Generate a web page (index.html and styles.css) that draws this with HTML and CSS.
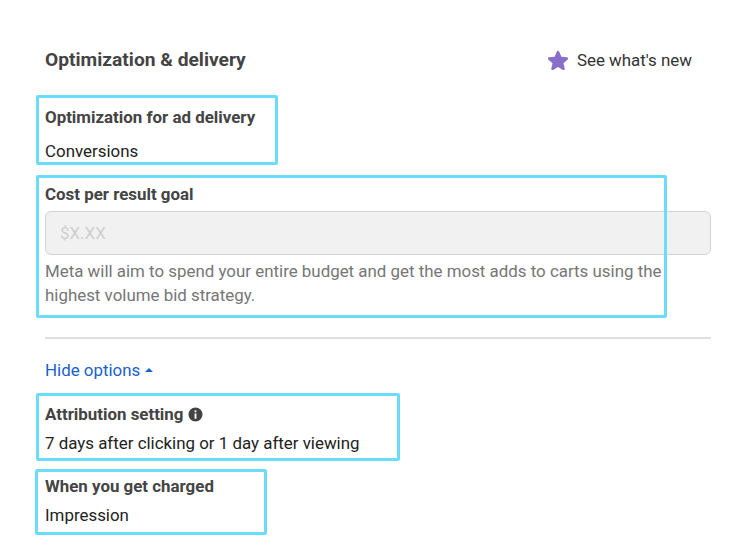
FILE: index.html
```html
<!DOCTYPE html>
<html lang="en">
<head>
<meta charset="utf-8">
<title>Optimization &amp; delivery</title>
<link rel="stylesheet" href="styles.css">
</head>
<body>
<main class="panel">
  <header class="head">
    <h2 class="title">Optimization &amp; delivery</h2>
    <div class="new">
      <svg class="star" viewBox="0 0 20 20" width="20" height="20" aria-hidden="true"><path d="M10 .8c.5 0 .9.3 1.100.7l2.300 5.200 5.600.6c1.100.1 1.500 1.400.7 2.100l-4.200 3.800 1.200 5.500c.2 1-.9 1.800-1.800 1.300L10 17.100l-4.900 2.900c-.9.5-2-.3-1.800-1.300l1.200-5.500L.3 9.400c-.8-.7-.4-2 .7-2.100l5.600-.6 2.300-5.200c.2-.4.6-.7 1.100-.7z"/></svg>
      <span>See what's new</span>
    </div>
  </header>

  <section class="group g1">
    <span class="mark m1"></span>
    <div class="label">Optimization for ad delivery</div>
    <div class="value">Conversions</div>
  </section>

  <section class="group g2">
    <span class="mark m2"></span>
    <div class="label">Cost per result goal</div>
    <div class="input">$X.XX</div>
    <p class="help">Meta will aim to spend your entire budget and get the most adds to carts using the highest volume bid strategy.</p>
  </section>

  <hr class="rule">

  <div class="toggle">Hide options <span class="caret"></span></div>

  <section class="group g3">
    <span class="mark m3"></span>
    <div class="label">Attribution setting
      <svg class="info" viewBox="0 0 16 16" width="15" height="15" aria-hidden="true"><path fill-rule="evenodd" d="M8 .5a7.500 7.500 0 1 1 0 15 7.500 7.500 0 0 1 0-15zM7 7v5.500h2V7H7zm1-3.500a1.150 1.150 0 1 0 0 2.300 1.150 1.150 0 0 0 0-2.300z"/></svg>
    </div>
    <div class="value">7 days after clicking or 1 day after viewing</div>
  </section>

  <section class="group g4">
    <span class="mark m4"></span>
    <div class="label">When you get charged</div>
    <div class="value">Impression</div>
  </section>
</main>
</body>
</html>
```

FILE: styles.css
```css
* { box-sizing: border-box; }

html, body {
  margin: 0;
  background: #fff;
}

body {
  width: 748px;
  height: 552px;
  overflow: hidden;
  font-family: Roboto, "Liberation Sans", sans-serif;
  font-size: 16.9px;
  line-height: 20px;
  color: #1c1e21;
}

.panel {
  width: 711px;
  padding: 46px 0 0 45px;
}

.head {
  display: flex;
  justify-content: space-between;
  align-items: center;
  height: 28px;
  margin-bottom: 33px;
}

.title {
  margin: 0;
  font-size: 19.2px;
  line-height: 28px;
  font-weight: 700;
  color: #444;
}

.new {
  display: flex;
  align-items: center;
  gap: 9px;
  padding-right: 19px;
  color: #333;
}

.star { fill: #8a6fc9; }

.group { position: relative; }

.mark {
  position: absolute;
  border: 3px solid #6cdcfb;
  border-radius: 2px;
  pointer-events: none;
}

.m1 { left: -9px; top: -12px; width: 242px; height: 70px; }
.m2 { left: -9px; top: -9px; width: 631px; height: 143px; }
.m3 { left: -9px; top: -11px; width: 364px; height: 68px; }
.m4 { left: -10px; top: -7px; width: 232px; height: 66px; }

.label {
  display: flex;
  align-items: center;
  gap: 5px;
  height: 20px;
  font-weight: 700;
  color: #444;
}

.info { fill: #444; }

.value { color: #222; }

.g1 { height: 77px; }
.g1 .value { margin-top: 14px; }

.g2 { height: 153px; }

.input {
  width: 666px;
  height: 44px;
  margin-top: 7px;
  padding: 0 14px;
  line-height: 42px;
  border: 1px solid #d4d4d4;
  border-radius: 6px;
  background: #f1f1f1;
  color: #cfcfcf;
}

.help {
  margin: 4px 0 0;
  line-height: 24px;
  color: #767676;
  width: 625px;
}

.rule {
  width: 666px;
  height: 2px;
  margin: 0;
  border: 0;
  background: #dfe0e3;
}

.toggle {
  display: flex;
  align-items: center;
  gap: 5px;
  height: 20px;
  margin: 21px 0 24px;
  color: #1a5fce;
}

.caret {
  width: 0;
  height: 0;
  border: 4px solid transparent;
  border-top: 0;
  border-bottom: 4px solid #1a5fce;
}

.g3 { height: 72px; }
.g3 .value { margin-top: 9px; }

.g4 .value { margin-top: 9px; }
```
